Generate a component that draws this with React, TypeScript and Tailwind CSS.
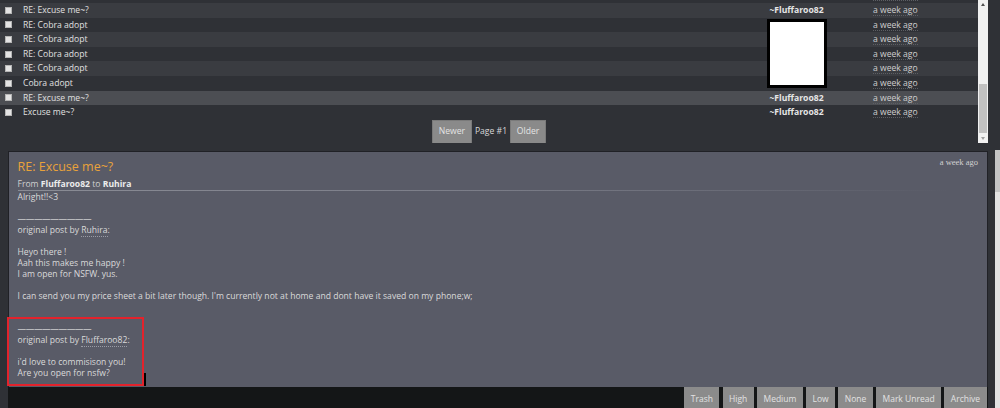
import React from "react";

type Row = {
  subject: string;
  author: string;
  tone: "dark" | "light" | "active";
};

const rows: Row[] = [
  { subject: "RE: Cobra adopt", author: "", tone: "dark" },
  { subject: "RE: Excuse me~?", author: "~Fluffaroo82", tone: "light" },
  { subject: "RE: Cobra adopt", author: "", tone: "dark" },
  { subject: "RE: Cobra adopt", author: "", tone: "light" },
  { subject: "RE: Cobra adopt", author: "", tone: "dark" },
  { subject: "RE: Cobra adopt", author: "", tone: "light" },
  { subject: "Cobra adopt", author: "", tone: "dark" },
  { subject: "RE: Excuse me~?", author: "~Fluffaroo82", tone: "active" },
  { subject: "Excuse me~?", author: "~Fluffaroo82", tone: "dark" },
];

const toneClass = {
  dark: "bg-[#2f3136]",
  light: "bg-[#3a3c41]",
  active: "bg-[#4c4e53]",
};

const actions = ["Trash", "High", "Medium", "Low", "None", "Mark Unread", "Archive"];

const Dashes = () => (
  <span className="tracking-[-0.4px]">—————————</span>
);

const Who = ({ name }: { name: string }) => (
  <span className="border-b border-dotted border-[#9a9ca6]">{name}</span>
);

export default function App() {
  return (
    <div className="relative w-[1000px] h-[408px] overflow-hidden bg-[#2f3136] font-['Open_Sans',sans-serif] text-[#dcdcdc]">
      <div className="flex">
        <div className="w-[995px]">
          {/* message list */}
          <div className="flex">
            <div className="w-[978px] h-[143px] overflow-hidden">
              <div className="-mt-[11.6px]">
                {rows.map((r, i) => (
                  <div
                    key={i}
                    className={`flex items-center h-[14.62px] text-[8.6px] leading-[14.62px] ${toneClass[r.tone]}`}
                  >
                    <div className="w-[23px] flex items-center pl-[5px]">
                      <span className="block w-[7px] h-[7px] bg-[#e4e4e4] border border-[#b5b5b5]" />
                    </div>
                    <div className="flex-1 text-[#e0e0e0]">{r.subject}</div>
                    <div className="w-[113px] text-center font-bold text-[#e6e6e6]">
                      {r.author}
                    </div>
                    <div className="w-[125px] pl-[20px]">
                      <span className="text-[#cfcfcf] border-b border-dotted border-[#5d5f64] leading-[10px] inline-block">
                        a week ago
                      </span>
                    </div>
                  </div>
                ))}
              </div>
              <div className="flex justify-center items-center gap-[3px] text-[8.6px]">
                <button className="h-[24px] w-[40px] bg-[#8a8a8a] text-[#e4e4e4] border border-[#7a7a7a]">
                  Newer
                </button>
                <span className="text-[#d8d8d8]">Page #1</span>
                <button className="h-[24px] w-[36px] bg-[#8a8a8a] text-[#e4e4e4] border border-[#7a7a7a]">
                  Older
                </button>
              </div>
            </div>
            {/* inner scrollbar */}
            <div className="w-[10px] h-[143px] bg-[#f1f1f1] flex flex-col items-center">
              <div className="h-[8px] flex items-center">
                <span className="block w-0 h-0 border-l-[2.5px] border-r-[2.5px] border-b-[3px] border-l-transparent border-r-transparent border-b-[#505050]" />
              </div>
              <div className="flex-1 w-full flex flex-col justify-end px-[1px]">
                <div className="h-[49px] bg-[#c1c1c1]" />
              </div>
              <div className="h-[10px] flex items-center">
                <span className="block w-0 h-0 border-l-[2.5px] border-r-[2.5px] border-t-[3px] border-l-transparent border-r-transparent border-t-[#a0a0a0]" />
              </div>
            </div>
          </div>

          {/* message panel */}
          <div className="ml-[7.5px] mt-[8px] w-[980.5px]">
            <div className="h-[236px] bg-[#595b67] border border-[#202126] border-b-0 px-[9px] pt-[7px]">
              <div className="flex items-start justify-between">
                <h2 className="text-[12.5px] leading-[16px] text-[#e9a23a]">RE: Excuse me~?</h2>
                <span className="-mt-[2px] font-['Liberation_Serif',serif] text-[8.5px] leading-[10px] text-[#d2d2d2]">
                  a week ago
                </span>
              </div>
              <div className="mt-[4px] text-[8.6px] leading-[11.3px] text-[#d0d0d0]">
                From <b className="text-[#ececec]">Fluffaroo82</b> to{" "}
                <b className="text-[#ececec]">Ruhira</b>
              </div>
              <div className="h-[1px] w-[930px] bg-gradient-to-r from-[#8a8c95] via-[#7b7d88] to-transparent" />
              <div className="mt-[1px] text-[8.6px] leading-[11px] text-[#dadada]">
                <div>Alright!!&lt;3</div>
                <div>&nbsp;</div>
                <div>
                  <Dashes />
                </div>
                <div>
                  original post by <Who name="Ruhira" />:
                </div>
                <div>&nbsp;</div>
                <div>Heyo there !</div>
                <div>Aah this makes me happy !</div>
                <div>I am open for NSFW. yus.</div>
                <div>&nbsp;</div>
                <div>
                  I can send you my price sheet a bit later though. I'm currently not at home and dont have it saved on my phone;w;
                </div>
                <div>&nbsp;</div>
                <div>&nbsp;</div>
                <div>
                  <Dashes />
                </div>
                <div>
                  original post by <Who name="Fluffaroo82" />:
                </div>
                <div>&nbsp;</div>
                <div>i'd love to commisison you!</div>
                <div>Are you open for nsfw?</div>
              </div>
            </div>
            <div className="h-[30px] bg-[#141617] flex justify-end gap-[3.4px] pr-[1.5px]">
              {actions.map((a) => (
                <button
                  key={a}
                  className="h-[25px] px-[6.4px] bg-[#8b8b8b] text-[8.5px] text-[#e2e2e2]"
                >
                  {a}
                </button>
              ))}
            </div>
          </div>
        </div>

        {/* page scrollbar, cut off at the edge */}
        <div className="w-[5px] h-[408px] flex flex-col">
          <div className="h-[150px] bg-[#2f3136]" />
          <div className="h-[42px] bg-[#c4c4c4]" />
          <div className="flex-1 bg-[#e2e2e2]" />
        </div>
      </div>

      {/* redaction box over the author column */}
      <div className="absolute left-[767px] top-[18.5px] w-[60px] h-[69px] bg-white border-[3px] border-black" />

      {/* red annotation */}
      <div className="absolute left-[7px] top-[316.5px] w-[137px] h-[69px] border-[2.5px] border-[#e3232c]" />
      <div className="absolute left-[143.5px] top-[373px] w-[2px] h-[13px] bg-black" />
    </div>
  );
}
